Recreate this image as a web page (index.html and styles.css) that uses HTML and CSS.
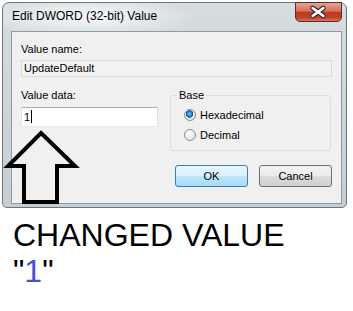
FILE: index.html
```html
<!DOCTYPE html>
<html lang="en">
<head>
    <meta charset="UTF-8">
    <title>Edit DWORD (32-bit) Value</title>
    <link rel="stylesheet" href="styles.css">
</head>
<body>
    <div class="window">
        <div class="titlebar">
            <span class="title">Edit DWORD (32-bit) Value</span>
            <span class="close">
                <svg width="47" height="20" viewBox="0 0 47 20">
                    <path d="M18 6 L29 14 M29 6 L18 14" stroke="#3b2a2a" stroke-width="5" stroke-linecap="round"/>
                    <path d="M18 6 L29 14 M29 6 L18 14" stroke="#fff" stroke-width="2.6" stroke-linecap="round"/>
                </svg>
            </span>
        </div>
        <div class="client">
            <div class="label">Value name:</div>
            <div class="textbox readonly">UpdateDefault</div>
            <div class="data-row">
                <div class="data-col">
                    <div class="label">Value data:</div>
                    <div class="textbox edit">1<span class="caret"></span></div>
                </div>
                <fieldset class="base">
                    <legend>Base</legend>
                    <div class="radio-row"><span class="radio checked"></span>Hexadecimal</div>
                    <div class="radio-row second"><span class="radio"></span>Decimal</div>
                </fieldset>
            </div>
            <div class="buttons">
                <span class="btn default">OK</span>
                <span class="btn">Cancel</span>
            </div>
        </div>
    </div>

    <p class="caption">CHANGED VALUE<br>"<span class="num">1</span>"</p>

    <!-- hand drawn arrow pointing at the value box -->
    <svg class="arrow" width="353" height="311" viewBox="0 0 353 311">
        <polygon points="41,133 75,166 57,166 57,202 24,202 24,166 8,166" fill="none" stroke="#000" stroke-width="4" stroke-linejoin="miter"/>
    </svg>
</body>
</html>
```

FILE: styles.css
```css
body {
    margin: 0;
    background-color: #fff;
    font-family: "Liberation Sans", Arial, sans-serif;
    position: relative;
    height: 311px;
    overflow: hidden;
}
.window {
    box-sizing: border-box;
    width: 345px;
    height: 206px;
    margin: 2px 0 0 2px;
    padding: 0 4px 3px 8px;
    border: 1px solid #6d7377;
    border-radius: 7px 7px 5px 5px;
    background:
        radial-gradient(ellipse 110px 20px at 85px 14px, rgba(255, 255, 255, 0.8), rgba(255, 255, 255, 0)),
        linear-gradient(#d6dde1, #c6ced3);
    display: flex;
    flex-direction: column;
}
.titlebar {
    height: 28px;
    display: flex;
    justify-content: space-between;
    align-items: flex-start;
}
.title {
    font-size: 12px;
    line-height: 15px;
    padding: 6px 0 0 1px;
    color: #000;
}
.close {
    box-sizing: border-box;
    width: 47px;
    height: 20px;
    margin-top: -1px;
    border: 1px solid #5c2b22;
    border-radius: 0 0 5px 5px;
    background: linear-gradient(#e9a292 0%, #d4735e 45%, #bf3b22 52%, #c0412a 80%, #d8745a 100%);
    display: flex;
}
.close svg {
    margin: -1px 0 0 -1px;
}
.client {
    flex: 1;
    border: 1px solid #8f9aa2;
    background-color: #f0f0f0;
    padding: 11px 9px 0 9px;
    font-size: 11px;
    color: #000;
}
.label {
    line-height: 13px;
}
.textbox {
    box-sizing: border-box;
    padding: 0 2px;
    border: 1px solid;
}
.readonly {
    height: 17px;
    margin-top: 4px;
    line-height: 15px;
    border-color: #d9d9d9;
    background-color: #f2f2f2;
}
.edit {
    height: 20px;
    margin-top: 5px;
    line-height: 18px;
    border-color: #abadb3 #dbdfe6 #e3e9ef #e2e3ea;
    background-color: #fff;
}
.caret {
    display: inline-block;
    width: 1px;
    height: 13px;
    margin-left: 1px;
    vertical-align: -2px;
    background-color: #000;
}
.data-row {
    display: flex;
    align-items: flex-start;
    margin-top: 12px;
}
.data-col {
    width: 137px;
}
.base {
    box-sizing: border-box;
    width: 161px;
    height: 62px;
    margin: 0 0 0 12px;
    padding: 6px 0 0 6px;
    border: 1px solid #d5dfe5;
    border-radius: 3px;
}
.base legend {
    padding: 0 2px;
    line-height: 13px;
}
.radio-row {
    display: flex;
    align-items: center;
    gap: 4px;
    height: 13px;
    margin-left: 7px;
}
.radio-row.second {
    margin-top: 7px;
}
.radio {
    box-sizing: border-box;
    width: 12px;
    height: 12px;
    border: 1px solid #8a8f94;
    border-radius: 50%;
    background: radial-gradient(circle at 40% 35%, #ffffff, #d8d8d8);
}
.radio.checked {
    background:
        radial-gradient(circle at 45% 40%, #7fd0f5 0, #1c7fc0 2.5px, #0d4f8a 3.5px, rgba(0, 0, 0, 0) 4px),
        radial-gradient(circle at 40% 35%, #ffffff, #d8d8d8);
}
.buttons {
    display: flex;
    justify-content: flex-end;
    gap: 11px;
    margin-top: 14px;
}
.btn {
    box-sizing: border-box;
    width: 73px;
    height: 22px;
    line-height: 20px;
    text-align: center;
    border: 1px solid #707070;
    border-radius: 3px;
    background: linear-gradient(#f2f2f2 0%, #ebebeb 50%, #dddddd 51%, #cfcfcf 100%);
}
.btn.default {
    border-color: #3c7fb1;
    background: linear-gradient(#eaf6fd 0%, #d9f0fc 50%, #bee6fd 51%, #a7d9f5 100%);
}
.caption {
    margin: 9px 0 0 13px;
    font-size: 32px;
    line-height: 36px;
    color: #000;
}
.caption .num {
    color: #4a4fd6;
}
.arrow {
    position: absolute;
    left: 0;
    top: 0;
    pointer-events: none;
}
```
